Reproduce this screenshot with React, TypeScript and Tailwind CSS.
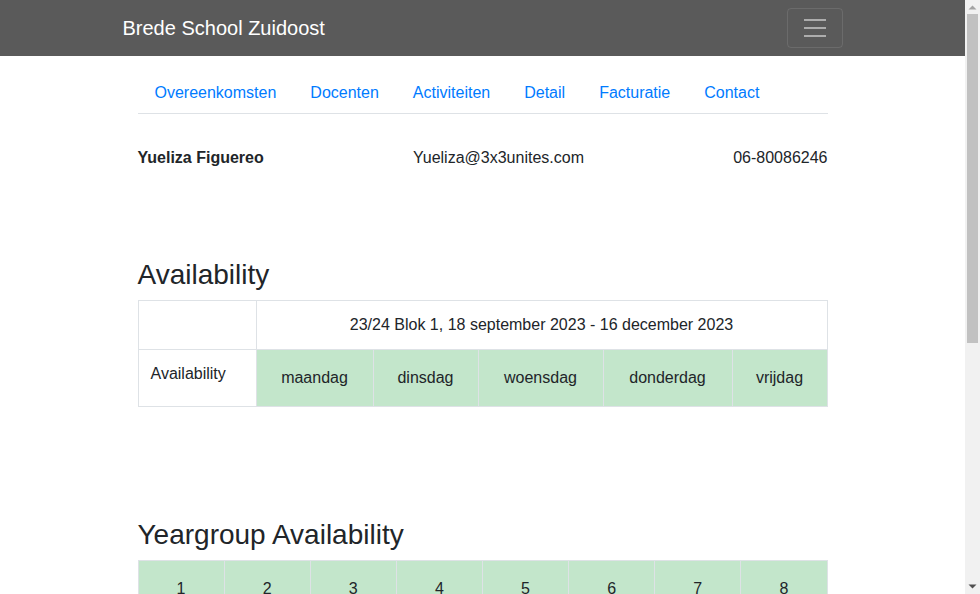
const tabs = ['Overeenkomsten', 'Docenten', 'Activiteiten', 'Detail', 'Facturatie', 'Contact']

const days = [
  { label: 'maandag', w: 'w-[117px]' },
  { label: 'dinsdag', w: 'w-[105px]' },
  { label: 'woensdag', w: 'w-[125px]' },
  { label: 'donderdag', w: 'w-[129px]' },
  { label: 'vrijdag', w: '' },
]

const groups = ['1', '2', '3', '4', '5', '6', '7', '8']

// the browser scrollbar visible in the screenshot
function Scrollbar() {
  return (
    <div className="flex w-[15px] shrink-0 flex-col items-center bg-[#f1f1f1]">
      <svg width="15" height="14" viewBox="0 0 15 14" className="shrink-0">
        <path d="M3.5 9.5 7.5 5.5 11.5 9.5z" fill="#a3a3a3" />
      </svg>
      <div className="h-[329px] w-[11px] bg-[#c1c1c1]"></div>
      <div className="flex-1"></div>
      <svg width="15" height="14" viewBox="0 0 15 14" className="shrink-0">
        <path d="M3.5 4.5 7.5 8.5 11.5 4.5z" fill="#505050" />
      </svg>
    </div>
  )
}

export default function App() {
  return (
    <div className="flex h-screen overflow-hidden bg-white text-[#212529] font-['Liberation_Sans',Arial,sans-serif] text-base">
      <div className="min-w-0 flex-1 overflow-hidden">
        {/* navbar */}
        <nav className="h-14 bg-[#5a5a5a]">
          <div className="mx-auto flex h-full max-w-[720px] items-center justify-between">
            <a className="text-xl leading-[30px] text-white">Brede School Zuidoost</a>
            <button className="flex h-10 w-14 items-center justify-center rounded border border-white/10">
              <svg width="30" height="30" viewBox="0 0 30 30">
                <path d="M4 7h22M4 15h22M4 23h22" stroke="rgba(255,255,255,0.5)" strokeWidth="2" />
              </svg>
            </button>
          </div>
        </nav>

        <main className="mx-auto max-w-[720px] px-[15px] pb-[400px]">
          <ul className="mt-[17px] flex border-b border-[#dee2e6]">
            {tabs.map((t) => (
              <li key={t}>
                <a className="block px-[17px] py-2 leading-6 text-[#007bff]">{t}</a>
              </li>
            ))}
          </ul>

          <div className="mt-8 flex justify-between leading-6">
            <span className="font-bold">Yueliza Figuereo</span>
            <span>Yueliza@3x3unites.com</span>
            <span>06-80086246</span>
          </div>

          <h2 className="mt-[88px] mb-2 text-[28px] leading-[34px]">Availability</h2>
          <table className="w-full border-collapse border border-[#dee2e6]">
            <tbody>
              <tr>
                <td className="w-[118px] border border-[#dee2e6]"></td>
                <td colSpan={5} className="h-[49px] border border-[#dee2e6] px-3 text-center align-middle">
                  23/24 Blok 1, 18 september 2023 - 16 december 2023
                </td>
              </tr>
              <tr>
                <td className="h-[57px] border border-[#dee2e6] px-3 pt-3 align-top">Availability</td>
                {days.map((d) => (
                  <td key={d.label} className={`${d.w} border border-[#dee2e6] bg-[#c3e6cb] text-center align-middle`}>
                    {d.label}
                  </td>
                ))}
              </tr>
            </tbody>
          </table>

          <h2 className="mt-[111px] mb-2 text-[28px] leading-[34px]">Yeargroup Availability</h2>
          <table className="w-full table-fixed border-collapse border border-[#dee2e6]">
            <tbody>
              <tr>
                {groups.map((g) => (
                  <td key={g} className="h-[57px] border border-[#dee2e6] bg-[#c3e6cb] text-center align-middle">
                    {g}
                  </td>
                ))}
              </tr>
            </tbody>
          </table>
        </main>
      </div>
      <Scrollbar />
    </div>
  )
}
